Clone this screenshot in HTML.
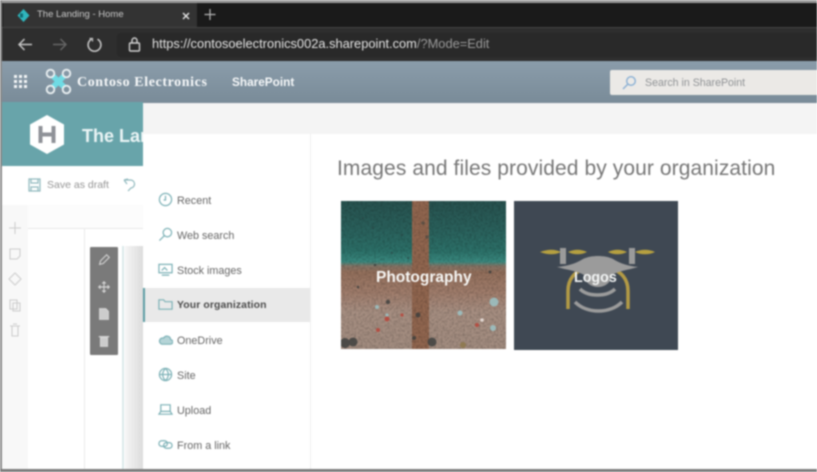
<!DOCTYPE html>
<html><head><meta charset="utf-8"><style>
html,body{margin:0;padding:0;width:817px;height:472px;overflow:hidden;background:#fff}
#w{position:absolute;left:0;top:0;width:817px;height:472px;overflow:hidden;filter:blur(.8px);font-family:"Liberation Sans",sans-serif}
#w div,#w span.a,#w svg{position:absolute}
.t{white-space:nowrap;line-height:1}
.n{left:177px;font-size:10.8px;color:#666;white-space:nowrap;line-height:12px}
.i{left:158px;width:15px;height:15px;fill:none;stroke:#7cb1b6;stroke-width:1.300}
.l{left:8px;width:14px;height:14px;fill:none;stroke:#cdcdcd;stroke-width:1.100}
.g{left:97px;width:14px;height:14px;fill:none;stroke:#d4d4d4;stroke-width:1.300}
</style></head><body><div id="w">
<div style="left:0;top:27px;width:817px;height:34px;background:#2e2e2e;border-top:1px solid #444;box-sizing:border-box"></div>
<div style="left:0;top:3px;width:817px;height:24px;background:#1a1a1a"></div>
<div style="left:3px;top:3px;width:194px;height:24px;background:#333"></div>
<svg style="left:16px;top:8px" width="15" height="15" viewBox="0 0 15 15"><path d="M7.500 1 13.500 7.500 7.500 14 1.500 7.500z" fill="#2fb6bd"/><path d="M4 5.500h3v4H4z" fill="#126a72"/></svg>
<div class="t" style="left:37px;top:10px;font-size:9.500px;color:#c8c8c8">The Landing - Home</div>
<svg style="left:181px;top:11px" width="10" height="10" viewBox="0 0 10 10"><path d="M2 2l6 6M8 2l-6 6" stroke="#e6e6e6" stroke-width="1.400"/></svg>
<svg style="left:204px;top:8px" width="12" height="13" viewBox="0 0 12 13"><path d="M6 1v11M.5 6.500h11" stroke="#b5b5b5" stroke-width="1.200"/></svg>
<svg style="left:16px;top:36px" width="18" height="17" viewBox="0 0 18 17"><path d="M16 8.500H3M8.500 3 3 8.500 8.500 14" fill="none" stroke="#c4c4c4" stroke-width="1.500"/></svg>
<svg style="left:51px;top:36px" width="18" height="17" viewBox="0 0 18 17"><path d="M2 8.500h13M9.500 3 15 8.500 9.500 14" fill="none" stroke="#666" stroke-width="1.400"/></svg>
<svg style="left:86px;top:36px" width="17" height="17" viewBox="0 0 17 17"><path d="M5.500 3.200a6.400 6.400 0 1 0 6 0" fill="none" stroke="#c4c4c4" stroke-width="1.600"/><path d="M3.500 2.500h3v3" fill="none" stroke="#c4c4c4" stroke-width="1.200"/></svg>
<div style="left:117px;top:33px;width:700px;height:24px;background:#292929;border-radius:4px 0 0 4px"></div>
<svg style="left:128px;top:36px" width="13" height="17" viewBox="0 0 13 17"><rect x="1.500" y="7" width="10" height="8" rx="1" fill="none" stroke="#d0d0d0" stroke-width="1.400"/><path d="M4 7V4.500a2.500 2.500 0 0 1 5 0V7" fill="none" stroke="#d0d0d0" stroke-width="1.400"/></svg>
<div class="t" style="left:152px;top:38px;font-size:12.850px;color:#e2e2e2">https://contosoelectronics002a.sharepoint.com<span style="color:#999">/?Mode=Edit</span></div>

<div style="left:0;top:61px;width:817px;height:42px;background:linear-gradient(#8a9caa,#798b98)"></div>
<svg style="left:14px;top:75px" width="14" height="14" viewBox="0 0 14 14" fill="#f2f5f6"><path d="M0 0h3v3H0zM5 0h3v3H5zM10 0h3v3h-3zM0 5h3v3H0zM5 5h3v3H5zM10 5h3v3h-3zM0 10h3v3H0zM5 10h3v3H5zM10 10h3v3h-3z"/></svg>
<svg style="left:45px;top:68px" width="27" height="27" viewBox="0 0 27 27"><path d="M8 8 19 19M19 8 8 19" stroke="#6fdbe4" stroke-width="5.500"/><g fill="none" stroke="#e8eef0" stroke-width="1.900"><circle cx="5.500" cy="5.500" r="3.800"/><circle cx="21.500" cy="5.500" r="3.800"/><circle cx="5.500" cy="21.500" r="3.800"/><circle cx="21.500" cy="21.500" r="3.800"/></g></svg>
<div class="t" style="left:77px;top:76px;font-size:14px;color:#f6f8f9;font-family:'Liberation Serif',serif;font-weight:bold;letter-spacing:.6px">Contoso Electronics</div>
<div class="t" style="left:232px;top:76px;font-size:11.800px;line-height:12px;color:#f6f8f9;font-weight:bold">SharePoint</div>
<div style="left:610px;top:70px;width:207px;height:25px;background:#ebe9e6;border-radius:2px 0 0 2px"></div>
<svg style="left:621px;top:75px" width="16" height="16" viewBox="0 0 16 16"><circle cx="10" cy="6" r="4.300" fill="none" stroke="#8ab0d4" stroke-width="1.400"/><path d="M7 9 2 14" stroke="#8ab0d4" stroke-width="1.400"/></svg>
<div class="t" style="left:645px;top:78px;font-size:10.600px;color:#8f9295">Search in SharePoint</div>

<div style="left:2px;top:102px;width:141px;height:64px;background:#68a4aa"></div>
<svg style="left:29px;top:115px" width="36" height="39" viewBox="0 0 36 39"><path d="M18 0 35 9.500v20L18 39 1 29.500v-20z" fill="#fff"/><path d="M11.500 11v17M24.500 11v17M11.500 19.500h13" stroke="#8f9298" stroke-width="4"/></svg>
<div class="t" style="left:82px;top:127px;font-size:18px;font-weight:bold;color:#eaf4f5;width:61px;overflow:hidden">The Landing</div>

<div style="left:2px;top:166px;width:141px;height:39px;background:#fff"></div>
<svg style="left:28px;top:178px" width="13" height="14" viewBox="0 0 13 14"><path d="M1 1h11v12H1zM3 1v4h7V1M3 13V9h7v4" fill="none" stroke="#8fb8bd" stroke-width="1.200"/></svg>
<div class="t" style="left:47px;top:180px;font-size:10.500px;color:#959595">Save as draft</div>
<svg style="left:122px;top:178px" width="14" height="14" viewBox="0 0 14 14"><path d="M2 2h6a4 4 0 0 1 1 8L6 13M2 2l4-1M2 2l3 4" fill="none" stroke="#8fb8bd" stroke-width="1.200"/></svg>
<div style="left:2px;top:205px;width:26px;height:264px;background:#f8f8f8"></div>
<div style="left:28px;top:205px;width:115px;height:24px;background:#fcfcfc"></div>
<div style="left:28px;top:228px;width:115px;height:1px;background:#e8e8e8"></div>
<div style="left:84px;top:229px;width:1px;height:240px;background:#eaeaea"></div>
<svg class="l" style="top:221px" viewBox="0 0 14 14"><path d="M7 1v12M1 7h12"/></svg>
<svg class="l" style="top:247px" viewBox="0 0 14 14"><path d="M2 2h10v7l-3 3H2z"/></svg>
<svg class="l" style="top:272px" viewBox="0 0 14 14"><path d="M7 1 13 7 7 13 1 7z"/></svg>
<svg class="l" style="top:298px" viewBox="0 0 14 14"><path d="M2 2h7v9H2zM5 5h7v8H5z"/></svg>
<svg class="l" style="top:323px" viewBox="0 0 14 14"><path d="M2 3h10M4 3v10h6V3M5 1h4"/></svg>
<div style="left:90px;top:247px;width:28px;height:108px;background:#7a7a7a;border-radius:1px"></div>
<svg class="g" style="top:253px" viewBox="0 0 16 16"><path d="M3 13l1-4 7-7 3 3-7 7z"/></svg>
<svg class="g" style="top:280px" viewBox="0 0 16 16"><path d="M8 3v10M3 8h10M6 4l2-2 2 2M6 12l2 2 2-2M4 6 2 8l2 2M12 6l2 2-2 2"/></svg>
<svg class="g" style="top:307px" viewBox="0 0 16 16"><path d="M3 2h7l3 3v9H3z" fill="#ccc"/></svg>
<svg class="g" style="top:334px" viewBox="0 0 16 16"><path d="M2 3h12M4 4h8v10H4z" fill="#ccc"/></svg>
<div style="left:122px;top:246px;width:21px;height:223px;background:#fff;border-left:2px solid #dbe9ea;box-sizing:border-box"></div>
<div style="left:125px;top:246px;width:18px;height:223px;background:linear-gradient(90deg,#f5f5f5,#dcdcdc)"></div>

<div style="left:143px;top:103px;width:674px;height:366px;background:#fff"></div>
<div style="left:143px;top:103px;width:674px;height:31px;background:#f4f4f4"></div>
<div style="left:310px;top:134px;width:1px;height:335px;background:#efefef"></div>
<div style="left:143px;top:288px;width:167px;height:34px;background:#e9e9e9"></div>
<div style="left:143px;top:288px;width:2px;height:34px;background:#5d9da4"></div>

<svg class="i" style="top:192px" viewBox="0 0 16 16"><circle cx="8" cy="8" r="6.500"/><path d="M8 4v4.500h-2"/></svg>
<div class="n" style="top:195px">Recent</div>
<svg class="i" style="top:227px" viewBox="0 0 16 16"><circle cx="10" cy="6" r="4.500"/><path d="M7 9 1.500 14.500"/></svg>
<div class="n" style="top:230px">Web search</div>
<svg class="i" style="top:262px" viewBox="0 0 16 16"><path d="M1 2.500h14v9H1z"/><path d="M4 14h8M4 9l3-3 3 3"/></svg>
<div class="n" style="top:265px">Stock images</div>
<svg class="i" style="top:297px" viewBox="0 0 16 16"><path d="M1 3h5l1.500 2H15v8H1z"/></svg>
<div class="n" style="top:300px;color:#4a4a4a;font-weight:bold;font-size:10.400px;letter-spacing:.12px">Your organization</div>
<svg class="i" style="top:332px" viewBox="0 0 16 16"><path d="M4 13h9a2.500 2.500 0 0 0 .5-5A4 4 0 0 0 6 6.500 3.300 3.300 0 0 0 4 13z" fill="#b5d4d7"/></svg>
<div class="n" style="top:335px">OneDrive</div>
<svg class="i" style="top:367px" viewBox="0 0 16 16"><circle cx="8" cy="8" r="6.500"/><path d="M1.500 8h13M8 1.500c-4 4-4 9 0 13M8 1.500c4 4 4 9 0 13"/></svg>
<div class="n" style="top:370px">Site</div>
<svg class="i" style="top:402px" viewBox="0 0 16 16"><path d="M3 10V3h10v7M1 13h14l-2-3H3z"/></svg>
<div class="n" style="top:405px">Upload</div>
<svg class="i" style="top:437px" viewBox="0 0 16 16"><rect x="1" y="4" width="9" height="6" rx="3"/><rect x="6" y="6" width="9" height="6" rx="3"/></svg>
<div class="n" style="top:440px">From a link</div>

<div class="t" style="left:337px;top:158px;font-size:21px;color:#777;letter-spacing:.09px">Images and files provided by your organization</div>

<svg style="left:341px;top:201px" width="165" height="148" viewBox="0 0 165 148">
<defs><linearGradient id="s" x1="0" y1="0" x2="0" y2="1"><stop offset="0" stop-color="#27524f"/><stop offset=".2" stop-color="#2a625d"/><stop offset=".34" stop-color="#2c7169"/><stop offset=".41" stop-color="#3a8a80"/><stop offset=".44" stop-color="#857466"/><stop offset=".48" stop-color="#94705c"/><stop offset=".62" stop-color="#a07d6c"/><stop offset=".75" stop-color="#a78f82"/><stop offset="1" stop-color="#a28c7f"/></linearGradient>
<filter id="nz" x="0" y="0" width="100%" height="100%"><feTurbulence type="fractalNoise" baseFrequency=".45" numOctaves="2" seed="4"/><feColorMatrix values="0 0 0 0 0 0 0 0 0 0 0 0 0 0 0 1.500 0 0 0 -.55"/></filter></defs>
<rect width="165" height="148" fill="url(#s)"/>
<rect x="71" width="17" height="148" fill="#91664f"/>
<rect width="165" height="148" filter="url(#nz)" opacity=".28"/>
<g fill="#2a3c3c" opacity=".45"><circle cx="22" cy="17" r="1.200"/><circle cx="32" cy="27" r="1.200"/><circle cx="61" cy="34" r="1.200"/><circle cx="86" cy="36" r="1.800"/><circle cx="82" cy="22" r="1.800"/><circle cx="67" cy="57" r="1.200"/><circle cx="51" cy="52" r="1.200"/></g>
<g fill="#3a3d3c" opacity=".8"><circle cx="47" cy="101" r="2.200"/><circle cx="77" cy="114" r="2.500"/><circle cx="91" cy="141" r="4.500"/><circle cx="73" cy="137" r="2"/><circle cx="4" cy="142" r="5"/><circle cx="12" cy="141" r="4.500"/><circle cx="149" cy="71" r="1.500"/><circle cx="34" cy="64" r="1.300"/><circle cx="17" cy="86" r="1.300"/></g>
<g fill="#9cc4c6" opacity=".85"><circle cx="153" cy="101" r="4.500"/><circle cx="119" cy="112" r="2.500"/><circle cx="36" cy="106" r="2"/><circle cx="152" cy="127" r="3"/><circle cx="46" cy="114" r="1.600"/></g>
<g fill="#b8453a" opacity=".85"><circle cx="46" cy="118" r="2.500"/><circle cx="136" cy="124" r="2"/><circle cx="37" cy="129" r="2"/><circle cx="61" cy="114" r="1.600"/></g>
<circle cx="141" cy="119" r="1.800" fill="#e2d8d2"/><circle cx="122" cy="144" r="3" fill="#8f7a52"/>
</svg>
<div class="t" style="left:376px;top:270px;font-size:15.500px;font-weight:bold;color:#f6f6f4">Photography</div>

<div style="left:514px;top:201px;width:164px;height:149px;background:#3f4853"></div>
<svg style="left:514px;top:201px" width="164" height="149" viewBox="0 0 164 149">
<path d="M54 108V90c0-12 7-20 17-22M114 108V90c0-12-7-20-17-22" fill="none" stroke="#b39a45" stroke-width="3.500"/>
<path d="M26 51c8-3 15-3 21 0-6 3-13 3-21 0zM54 51c6-3 13-3 19 0-6 3-13 3-19 0zM94 51c6-3 13-3 19 0-6 3-13 3-19 0zM121 51c6-3 14-3 20 0-6 3-14 3-20 0z" fill="#b6a040"/>
<path d="M46 47h6v16h-6zM115 47h6v16h-6z" fill="#9b9b9b"/>
<path d="M43 66c10-1 18-3 26-8 8-4 22-4 30 0 8 5 16 7 25 8-10 3-20 4-26 8-2 16-26 16-28 0-6-4-17-5-27-8z" fill="#9b9b9b"/>
<path d="M66 88c8 8 27 8 35 0M61 101c12 12 35 12 47 0" fill="none" stroke="#9b9b9b" stroke-width="3.500"/>
</svg>
<div class="t" style="left:574px;top:270px;font-size:15px;font-weight:bold;color:#f2f4f4;transform:scaleX(.95);transform-origin:left">Logos</div>

<div style="left:0;top:0;width:817px;height:3px;background:#9a9a9a"></div>
<div style="left:0;top:0;width:2px;height:472px;background:#8a8a8a"></div>
<div style="left:0;top:469px;width:817px;height:3px;background:#7c7c7c"></div>
</div></body></html>
